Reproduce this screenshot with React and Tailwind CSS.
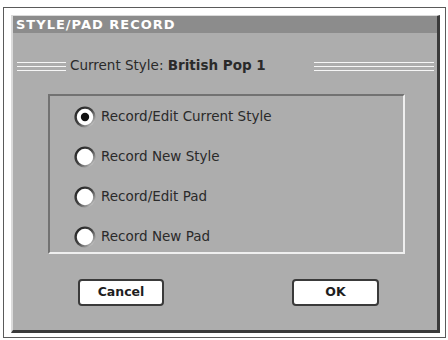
const OPTIONS = [
  { label: 'Record/Edit Current Style', selected: true },
  { label: 'Record New Style' },
  { label: 'Record/Edit Pad' },
  { label: 'Record New Pad' },
];

const Radio = ({ selected, id }) => (
  <svg width="22" height="22" viewBox="0 0 22 22" className="shrink-0">
    <defs>
      <linearGradient id={id} x1="0" y1="0" x2="1" y2="1">
        <stop offset="0" stopColor="#222222" />
        <stop offset="0.5" stopColor="#444444" />
        <stop offset="0.8" stopColor="#9a9a9a" />
        <stop offset="1" stopColor="#ececec" />
      </linearGradient>
    </defs>
    <circle cx="11" cy="11" r="9.4" fill="#ffffff" stroke={`url(#${id})`} strokeWidth="2.4" />
    {selected && <circle cx="11" cy="11" r="4.2" fill="#111111" />}
  </svg>
);

const Lines = ({ className }) => (
  <div className={`flex flex-col gap-[3px] ${className}`}>
    <div className="h-px bg-[#f6f6f6]" />
    <div className="h-px bg-[#f6f6f6]" />
    <div className="h-px bg-[#f6f6f6]" />
  </div>
);

export default function App() {
  return (
    <div className="w-[448px] h-[340px] bg-white pt-[7px] pl-[3px] font-['DejaVu_Sans',sans-serif]">
      <div className="w-[443px] h-[331px] border border-[#5a5a5a] pt-[7px] pl-[7px]">
        <div className="w-[429px] h-[318px] bg-[#adadad] border-l-2 border-t border-[#dadada] border-r-[3px] border-b-[3px] border-r-[#3a3a3a] border-b-[#3a3a3a] flex flex-col">
          {/* Title */}
          <div className="h-[17px] bg-[#8c8c8c] flex items-center pl-[3px] text-white font-bold text-[13px] tracking-[1px] leading-none">
            STYLE/PAD RECORD
          </div>

          {/* Current style */}
          <div className="mt-[23px] h-[20px] flex items-center pl-[4px] pr-[3px]">
            <Lines className="w-[49px]" />
            <span className="ml-[4px] text-[13.5px] text-[#2a2a2a] leading-none whitespace-nowrap">
              Current Style: <b className="font-bold">British Pop 1</b>
            </span>
            <Lines className="ml-auto w-[120px]" />
          </div>

          {/* Options */}
          <div className="mt-[18px] ml-[35px] w-[357px] h-[160px] border-2 border-t-[#727272] border-l-[#727272] border-r-[#efefef] border-b-[#efefef] flex flex-col gap-[18px] pt-[10px] pl-[24px]">
            {OPTIONS.map((o, i) => (
              <div key={o.label} className="h-[22px] flex items-center gap-[5px]">
                <Radio selected={o.selected} id={`rg${i}`} />
                <span className="text-[13.5px] text-[#2a2a2a] leading-none whitespace-nowrap">{o.label}</span>
              </div>
            ))}
          </div>

          {/* Buttons */}
          <div className="mt-[25px] flex pl-[65px] gap-[128px]">
            <button className="w-[86px] h-[27px] bg-white border-2 border-[#3a3a3a] rounded-[4px] text-[12.5px] font-bold text-[#1e1e1e] leading-none">
              Cancel
            </button>
            <button className="w-[87px] h-[27px] bg-white border-2 border-[#3a3a3a] rounded-[4px] text-[12.5px] font-bold text-[#1e1e1e] leading-none">
              OK
            </button>
          </div>
        </div>
      </div>
    </div>
  );
}
